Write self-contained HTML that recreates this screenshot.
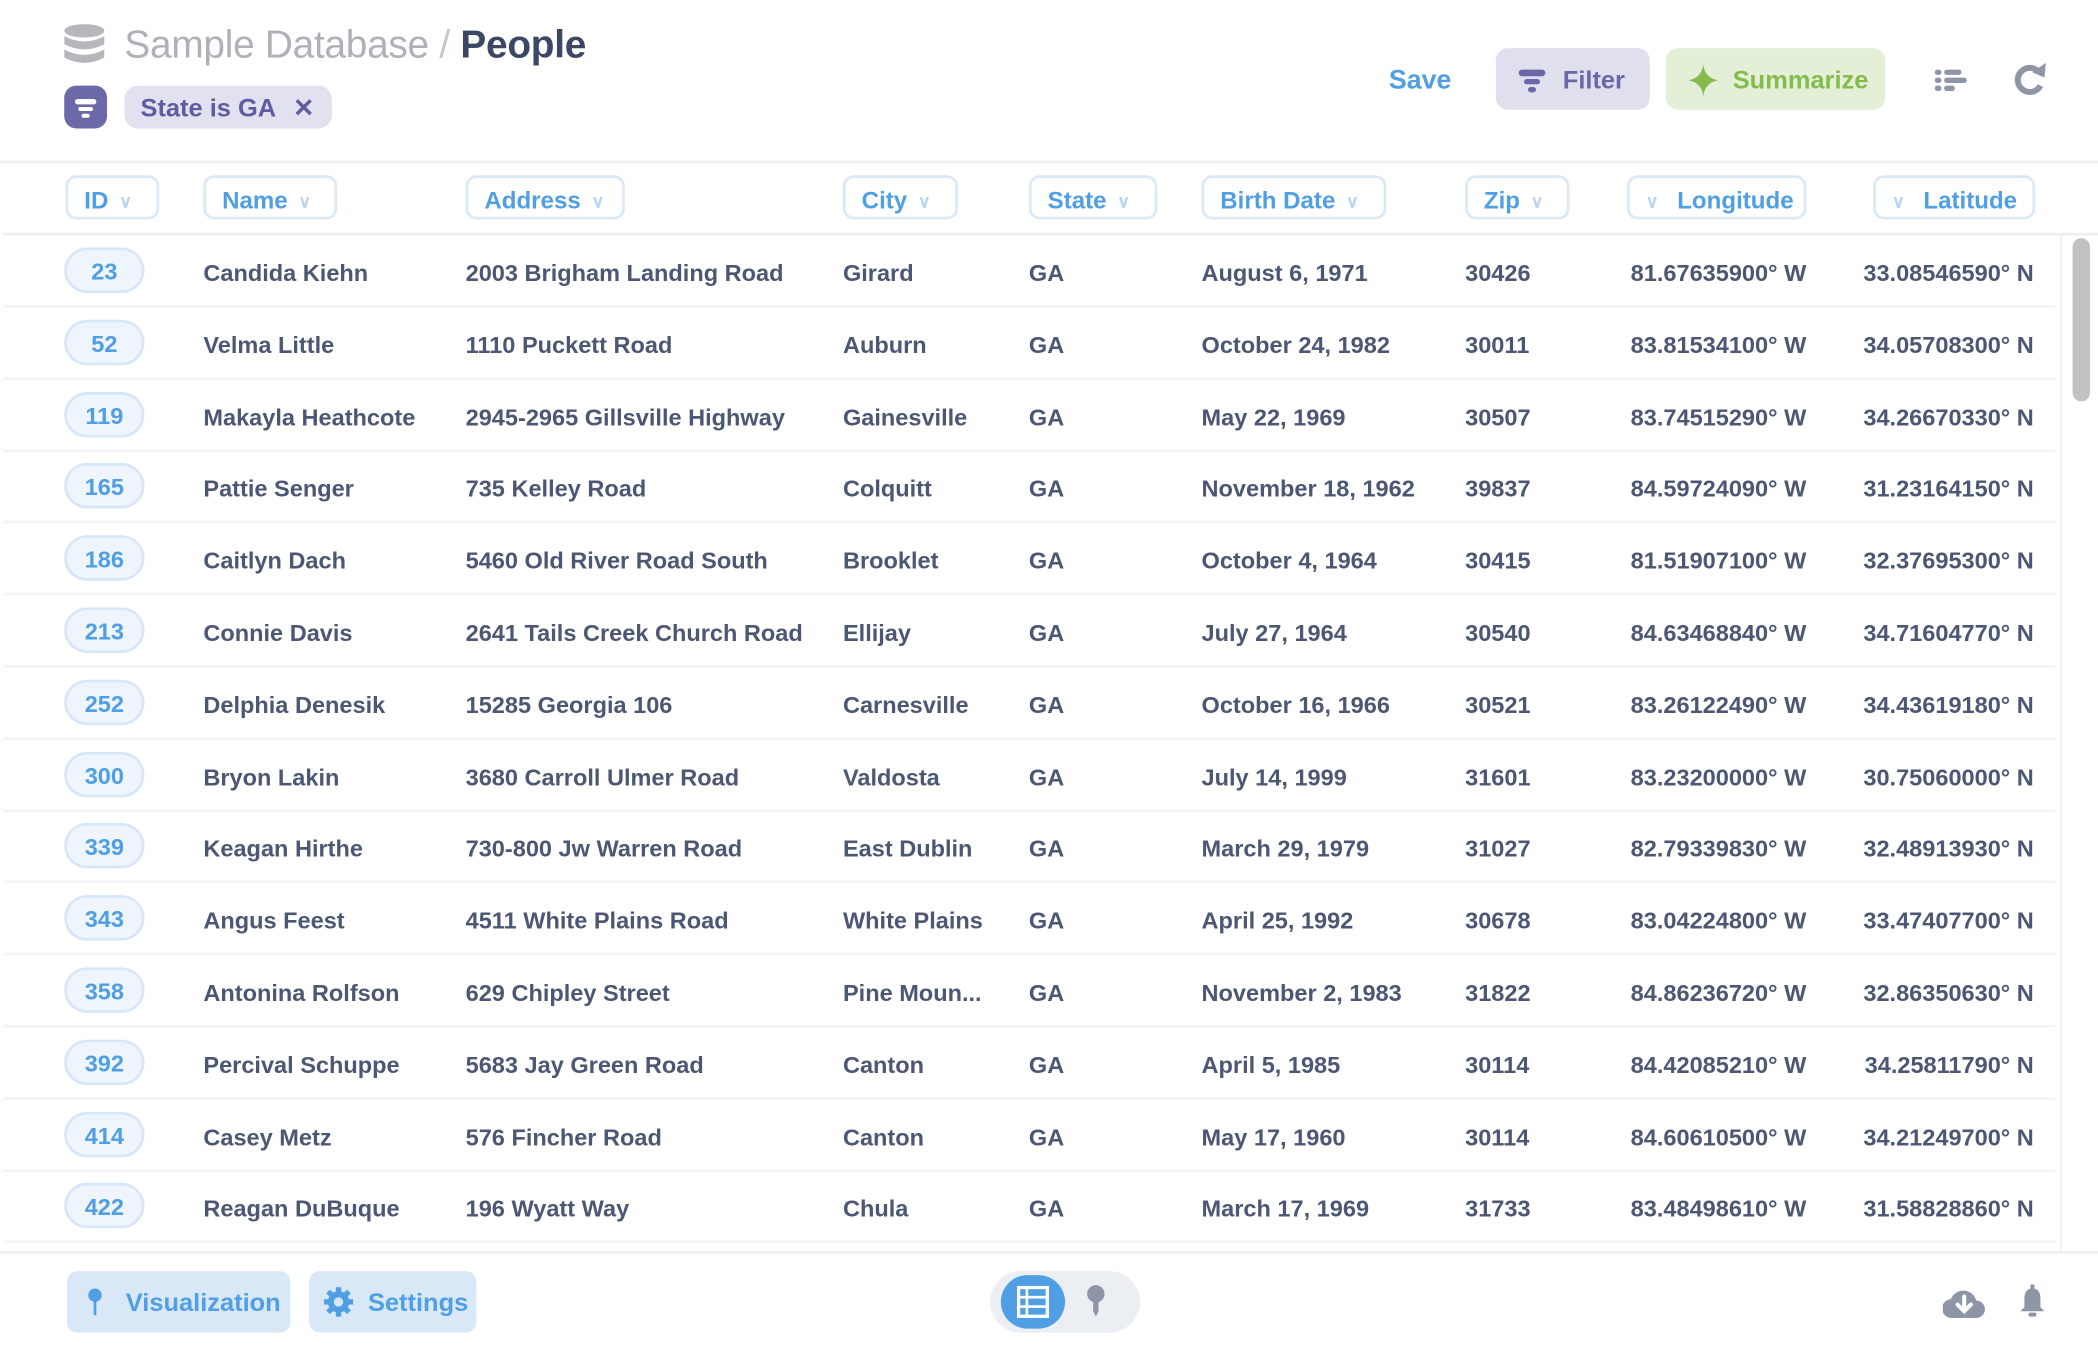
<!DOCTYPE html>
<html><head><meta charset="utf-8"><style>
html,body{margin:0;padding:0;background:#fff;width:2098px;height:1350px;overflow:hidden}
#w{position:absolute;left:0;top:0;width:1568px;height:1009px;transform:scale(1.33801);transform-origin:0 0;font-family:"Liberation Sans",sans-serif;color:#4c5773}
.a{position:absolute;white-space:nowrap}
.hp{position:absolute;top:131px;height:33px;border:2px solid #dbe9f7;border-radius:8px;box-sizing:border-box;color:#509ee3;font-weight:bold;font-size:18px;line-height:34px;padding:0 0 0 12px}
.hp .c{color:#b8d4ef;font-size:13px;margin-left:8px;vertical-align:1px}
.row{position:absolute;left:2px;width:1534px;height:54px;border-bottom:2px solid #f3f4f6;box-sizing:border-box}
.cell{position:absolute;top:2px;line-height:52px;font-size:17.6px;font-weight:bold;white-space:nowrap}
.id{position:absolute;left:46px;top:9px;width:60px;height:34px;border:2px solid #d7e7f7;background:#eef5fc;border-radius:17px;box-sizing:border-box;color:#509ee3;text-align:center;line-height:33px;font-size:17.6px;font-weight:bold}
.r{text-align:right}
</style></head><body><div id="w">
<svg class="a" style="left:48px;top:18px" width="30" height="31" viewBox="0 0 30 31"><g fill="#b5b7bd"><ellipse cx="15" cy="5" rx="15" ry="5"/><path d="M0 9q15 8 30 0v6q-15 8-30 0z"/><path d="M0 19q15 8 30 0v6q-15 8-30 0z"/></g></svg>
<div class="a" style="left:93px;top:18px;font-size:29px;color:#aeb1b8;letter-spacing:-0.2px">Sample Database <span style="color:#c4c6cc">/</span> <span style="color:#3b4764;font-weight:bold">People</span></div>
<div class="a" style="left:48px;top:64px;width:32px;height:32px;background:#6c69a9;border-radius:9px"><svg width="32" height="32"><g fill="#fff"><rect x="8" y="10" width="16" height="4" rx="2"/><rect x="10.5" y="16" width="11" height="3" rx="1.5"/><rect x="13" y="21" width="6" height="3" rx="1.5"/></g></svg></div>
<div class="a" style="left:93px;top:64px;width:155px;height:32px;background:#e1e1ef;border-radius:10px;color:#5e5b9f;font-weight:bold;font-size:19px;line-height:35px;padding-left:12px;box-sizing:border-box">State is GA <span style="margin-left:8px">✕</span></div>
<div class="a" style="left:1038px;top:49px;font-size:20px;font-weight:bold;color:#509ee3">Save</div>
<div class="a" style="left:1118px;top:36px;width:115px;height:46px;background:#dfdfee;border-radius:9px;color:#6a67a8;font-weight:bold;font-size:19px;line-height:50px">
<svg style="position:absolute;left:17px;top:14px" width="22" height="20"><g fill="#6a67a8"><rect x="0" y="2" width="20" height="5" rx="2.5"/><rect x="4" y="9" width="12" height="4" rx="2"/><rect x="7" y="15" width="6" height="4" rx="2"/></g></svg><span style="position:absolute;left:50px">Filter</span></div>
<div class="a" style="left:1245px;top:36px;width:164px;height:46px;background:#e3f0d7;border-radius:9px;color:#84bb4c;font-weight:bold;font-size:19px;line-height:50px">
<svg style="position:absolute;left:17px;top:12px" width="22" height="24" viewBox="0 0 22 24"><path d="M11 0Q12 10 22 12Q12 14 11 24Q10 14 0 12Q10 10 11 0z" fill="#84bb4c"/></svg><span style="position:absolute;left:50px">Summarize</span></div>
<svg class="a" style="left:1446px;top:50px" width="24" height="20"><g fill="#8e95a6"><rect x="0" y="2" width="5" height="4" rx="2"/><rect x="7" y="2" width="13" height="4" rx="2"/><rect x="0" y="8" width="5" height="4" rx="2"/><rect x="7" y="8" width="17" height="4" rx="2"/><rect x="0" y="14" width="5" height="4" rx="2"/><rect x="7" y="14" width="8" height="4" rx="2"/></g></svg>
<svg class="a" style="left:1505px;top:46px" width="26" height="26" viewBox="0 0 26 26"><path d="M19 8A9 9 0 1 0 20 18" fill="none" stroke="#8e95a6" stroke-width="4.5"/><path d="M14 8L24 1L23 12z" fill="#8e95a6"/></svg>
<div class="a" style="left:0;top:120px;width:1568px;height:2px;background:#eeeff1"></div>
<div class="hp" style="left:49px;width:70px">ID<span class="c">∨</span></div>
<div class="hp" style="left:152px;width:100px">Name<span class="c">∨</span></div>
<div class="hp" style="left:348px;width:119px">Address<span class="c">∨</span></div>
<div class="hp" style="left:630px;width:86px">City<span class="c">∨</span></div>
<div class="hp" style="left:769px;width:96px">State<span class="c">∨</span></div>
<div class="hp" style="left:898px;width:138px">Birth Date<span class="c">∨</span></div>
<div class="hp" style="left:1095px;width:78px">Zip<span class="c">∨</span></div>
<div class="hp" style="left:1216px;width:134px;padding-left:12px"><span class="c" style="margin:0 14px 0 0">∨</span>Longitude</div>
<div class="hp" style="left:1400px;width:121px;padding-left:12px"><span class="c" style="margin:0 14px 0 0">∨</span>Latitude</div>
<div class="a" style="left:2px;top:174px;width:1566px;height:2px;background:#eeeff1"></div>
<div id="rows"></div>
<div class="a" style="left:1540px;top:176px;width:1px;height:760px;background:#eee"></div>
<div class="a" style="left:1549px;top:178px;width:13px;height:122px;background:#c2c2c2;border-radius:7px"></div>
<div class="a" style="left:0;top:935px;width:1568px;height:2px;background:#eeeff1"></div>
<div class="a" style="left:50px;top:950px;width:167px;height:46px;background:#d9e8f6;border-radius:8px;color:#509ee3;font-weight:bold;font-size:19px;line-height:50px">
<svg style="position:absolute;left:15px;top:12px" width="12" height="22"><circle cx="6" cy="6" r="5" fill="#509ee3"/><rect x="5" y="10" width="2" height="11" fill="#509ee3"/></svg><span style="position:absolute;left:44px">Visualization</span></div>
<div class="a" style="left:231px;top:950px;width:125px;height:46px;background:#d9e8f6;border-radius:8px;color:#509ee3;font-weight:bold;font-size:19px;line-height:50px">
<svg style="position:absolute;left:11px;top:12px" width="22" height="22" viewBox="0 0 22 22"><g fill="#509ee3"><circle cx="11" cy="11" r="8"/><rect x="9" y="0" width="4" height="22"/><rect x="0" y="9" width="22" height="4"/><rect x="9" y="0" width="4" height="22" transform="rotate(45 11 11)"/><rect x="9" y="0" width="4" height="22" transform="rotate(-45 11 11)"/></g><circle cx="11" cy="11" r="3.5" fill="#d9e8f6"/></svg><span style="position:absolute;left:44px">Settings</span></div>
<div class="a" style="left:740px;top:950px;width:112px;height:46px;background:#ebeff4;border-radius:23px"></div>
<div class="a" style="left:748px;top:953px;width:48px;height:40px;background:#509ee3;border-radius:20px"><svg style="position:absolute;left:12px;top:8px" width="24" height="24"><rect x="0" y="0" width="24" height="24" fill="#fff"/><g fill="#509ee3"><rect x="2.5" y="2.5" width="4" height="5"/><rect x="8.5" y="2.5" width="13" height="5"/><rect x="2.5" y="9.5" width="4" height="5"/><rect x="8.5" y="9.5" width="13" height="5"/><rect x="2.5" y="16.5" width="4" height="5"/><rect x="8.5" y="16.5" width="13" height="5"/></g></svg></div>
<svg class="a" style="left:812px;top:960px" width="16" height="26"><circle cx="7" cy="7" r="6.5" fill="#8e95a6"/><path d="M5 12h4v8l-2 4l-2-4z" fill="#8e95a6"/></svg>
<svg class="a" style="left:1452px;top:962px" width="32" height="24" viewBox="0 0 32 24"><path d="M7 23a7 7 0 0 1-1-14a10 10 0 0 1 19 1a6.5 6.5 0 0 1 0 13z" fill="#8e95a6"/><path d="M16 7v10M11 13l5 5l5-5" fill="none" stroke="#fff" stroke-width="3" stroke-linecap="round"/></svg>
<svg class="a" style="left:1507px;top:960px" width="24" height="26" viewBox="0 0 24 26"><rect x="10.5" y="0" width="3" height="4" fill="#8e95a6"/><path d="M12 3c-5 0-6 4-6 8v6l-3 3h18l-3-3v-6c0-4-1-8-6-8z" fill="#8e95a6"/><rect x="9" y="21" width="6" height="3" rx="1.5" fill="#8e95a6"/></svg>
</div>
<script>
var d=[["23","Candida Kiehn","2003 Brigham Landing Road","Girard","August 6, 1971","30426","81.67635900° W","33.08546590° N"],
["52","Velma Little","1110 Puckett Road","Auburn","October 24, 1982","30011","83.81534100° W","34.05708300° N"],
["119","Makayla Heathcote","2945-2965 Gillsville Highway","Gainesville","May 22, 1969","30507","83.74515290° W","34.26670330° N"],
["165","Pattie Senger","735 Kelley Road","Colquitt","November 18, 1962","39837","84.59724090° W","31.23164150° N"],
["186","Caitlyn Dach","5460 Old River Road South","Brooklet","October 4, 1964","30415","81.51907100° W","32.37695300° N"],
["213","Connie Davis","2641 Tails Creek Church Road","Ellijay","July 27, 1964","30540","84.63468840° W","34.71604770° N"],
["252","Delphia Denesik","15285 Georgia 106","Carnesville","October 16, 1966","30521","83.26122490° W","34.43619180° N"],
["300","Bryon Lakin","3680 Carroll Ulmer Road","Valdosta","July 14, 1999","31601","83.23200000° W","30.75060000° N"],
["339","Keagan Hirthe","730-800 Jw Warren Road","East Dublin","March 29, 1979","31027","82.79339830° W","32.48913930° N"],
["343","Angus Feest","4511 White Plains Road","White Plains","April 25, 1992","30678","83.04224800° W","33.47407700° N"],
["358","Antonina Rolfson","629 Chipley Street","Pine Moun...","November 2, 1983","31822","84.86236720° W","32.86350630° N"],
["392","Percival Schuppe","5683 Jay Green Road","Canton","April 5, 1985","30114","84.42085210° W","34.25811790° N"],
["414","Casey Metz","576 Fincher Road","Canton","May 17, 1960","30114","84.60610500° W","34.21249700° N"],
["422","Reagan DuBuque","196 Wyatt Way","Chula","March 17, 1969","31733","83.48498610° W","31.58828860° N"]];
var h="";d.forEach(function(r,i){var t=176+i*53.8;
h+='<div class="row" style="top:'+t+'px"><div class="id">'+r[0]+'</div>'+
'<div class="cell" style="left:150px">'+r[1]+'</div><div class="cell" style="left:346px">'+r[2]+'</div><div class="cell" style="left:628px">'+r[3]+'</div><div class="cell" style="left:767px">GA</div><div class="cell" style="left:896px">'+r[4]+'</div><div class="cell" style="left:1093px">'+r[5]+'</div><div class="cell r" style="right:186px">'+r[6]+'</div><div class="cell r" style="right:16px">'+r[7]+'</div></div>';});
document.getElementById("rows").innerHTML=h;
</script>
</body></html>
